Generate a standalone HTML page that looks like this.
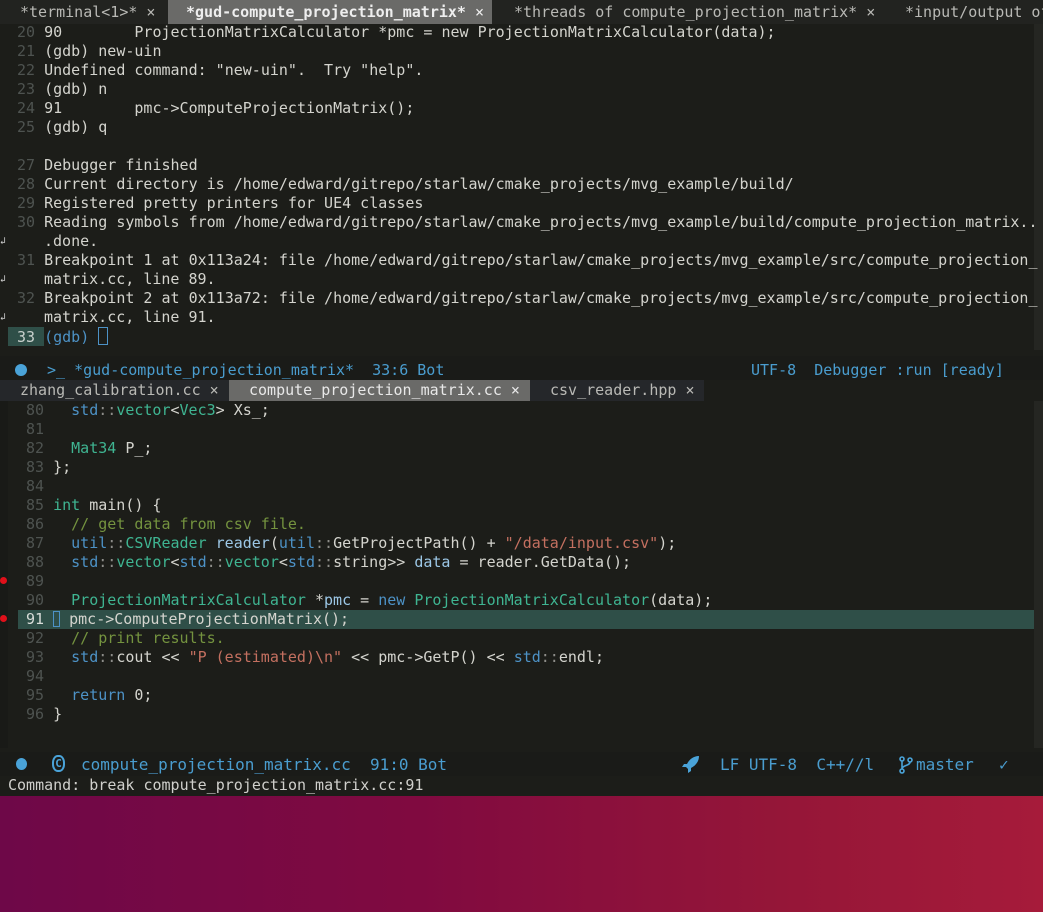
<!DOCTYPE html>
<html><head><meta charset="utf-8"><style>
body{margin:0;width:1043px;height:912px;overflow:hidden;background:linear-gradient(90deg,#6e0848 0%,#800a40 40%,#951638 75%,#a61b3a 100%);font-family:"DejaVu Sans Mono","Liberation Mono",monospace;font-size:15px;position:relative}
.win{position:absolute;left:0;top:0;width:1043px;height:796px;background:#1c1d19}
.l{position:absolute;white-space:pre;height:19px;line-height:19px;color:#d4d4ce}
.n{color:#4e5350}
.tabs{position:absolute;left:0;width:1043px;height:23px;background:#222320;line-height:23px;color:#b9b9b5;white-space:pre}
.tab{position:absolute;top:0;height:100%}
.b{color:#4d92c6}.g{color:#3fb592}.s{color:#c47060}.c{color:#74933f}.v{color:#9cc7e6}.d{color:#8e8e8a}
.st{color:#4a9dcf}
.w{position:absolute;left:0;color:#ccc;font-size:10px;line-height:19px;height:19px}
</style></head><body>
<div class="win"></div>
<div class="tabs" style="top:0;height:24px;line-height:24px">
<span class="tab" style="left:20px">*terminal&lt;1&gt;* ×</span>
<span class="tab" style="left:168px;width:324px;background:#6a6a68;color:#eee;font-weight:bold;padding-left:18px;box-sizing:border-box">*gud-compute_projection_matrix* <span style="font-weight:normal">×</span></span>
<span class="tab" style="left:514px">*threads of compute_projection_matrix* ×</span>
<span class="tab" style="left:905px">*input/output of</span>
</div>
<div style="position:absolute;left:1034px;top:24px;width:9px;height:326px;background:#252622"></div>
<div class="l" style="top:23px;left:17px"><span class="n">20</span> 90        ProjectionMatrixCalculator *pmc = new ProjectionMatrixCalculator(data);</div>
<div class="l" style="top:42px;left:17px"><span class="n">21</span> (gdb) new-uin</div>
<div class="l" style="top:61px;left:17px"><span class="n">22</span> Undefined command: "new-uin".  Try "help".</div>
<div class="l" style="top:80px;left:17px"><span class="n">23</span> (gdb) n</div>
<div class="l" style="top:99px;left:17px"><span class="n">24</span> 91        pmc-&gt;ComputeProjectionMatrix();</div>
<div class="l" style="top:118px;left:17px"><span class="n">25</span> (gdb) q</div>
<div class="l" style="top:156px;left:17px"><span class="n">27</span> Debugger finished</div>
<div class="l" style="top:175px;left:17px"><span class="n">28</span> Current directory is /home/edward/gitrepo/starlaw/cmake_projects/mvg_example/build/</div>
<div class="l" style="top:194px;left:17px"><span class="n">29</span> Registered pretty printers for UE4 classes</div>
<div class="l" style="top:213px;left:17px"><span class="n">30</span> Reading symbols from /home/edward/gitrepo/starlaw/cmake_projects/mvg_example/build/compute_projection_matrix..</div>
<div class="w" style="top:232px">↲</div><div class="l" style="top:232px;left:44px">.done.</div>
<div class="l" style="top:251px;left:17px"><span class="n">31</span> Breakpoint 1 at 0x113a24: file /home/edward/gitrepo/starlaw/cmake_projects/mvg_example/src/compute_projection_</div>
<div class="w" style="top:270px">↲</div><div class="l" style="top:270px;left:44px">matrix.cc, line 89.</div>
<div class="l" style="top:289px;left:17px"><span class="n">32</span> Breakpoint 2 at 0x113a72: file /home/edward/gitrepo/starlaw/cmake_projects/mvg_example/src/compute_projection_</div>
<div class="w" style="top:308px">↲</div><div class="l" style="top:308px;left:44px">matrix.cc, line 91.</div>
<div style="position:absolute;left:8px;top:327px;width:36px;height:19px;background:#2f4f48"></div>
<div class="l" style="top:327px;left:17px"><span style="color:#c8d0cc">33</span> <span class="b">(gdb)</span> <span style="display:inline-block;width:8px;height:16px;border:1px solid #4d92c6;vertical-align:-3px"></span></div>
<div style="position:absolute;left:0;top:356px;width:1043px;height:24px;background:#1a1b18"></div>
<div style="position:absolute;left:15px;top:364px;width:12px;height:12px;border-radius:50%;background:#4aa3d8"></div>
<div class="l st" style="top:359px;left:47px;line-height:22px">&gt;_ *gud-compute_projection_matrix*  33:6 Bot</div>
<div class="l st" style="top:359px;left:751px;line-height:22px">UTF-8  Debugger :run [ready]</div>
<div class="tabs" style="top:380px;height:21px;line-height:21px;background:#1c1d19">
<span class="tab" style="left:0;width:229px;background:#25272a;padding-left:20px;box-sizing:border-box">zhang_calibration.cc ×</span>
<span class="tab" style="left:229px;width:301px;background:#6a6a68;color:#e8e8e8;padding-left:20px;box-sizing:border-box">compute_projection_matrix.cc ×</span>
<span class="tab" style="left:530px;width:174px;background:#25272a;padding-left:20px;box-sizing:border-box">csv_reader.hpp ×</span>
</div>
<div style="position:absolute;left:0;top:401px;width:8px;height:347px;background:#191a17"></div>
<div style="position:absolute;left:1034px;top:401px;width:9px;height:347px;background:#252622"></div>
<div style="position:absolute;left:18px;top:610px;width:1016px;height:19px;background:#2f4f48"></div>
<div style="position:absolute;left:0;top:577px;width:7px;height:7px;border-radius:50%;background:#e0101a"></div>
<div style="position:absolute;left:0;top:615px;width:7px;height:7px;border-radius:50%;background:#e0101a"></div>
<div class="l" style="top:401px;left:26px"><span class="n">80</span>   <span class="b">std</span><span class="d">::</span><span class="g">vector</span>&lt;<span class="g">Vec3</span>&gt; Xs_;</div>
<div class="l" style="top:420px;left:26px"><span class="n">81</span></div>
<div class="l" style="top:439px;left:26px"><span class="n">82</span>   <span class="g">Mat34</span> P_;</div>
<div class="l" style="top:458px;left:26px"><span class="n">83</span> };</div>
<div class="l" style="top:477px;left:26px"><span class="n">84</span></div>
<div class="l" style="top:496px;left:26px"><span class="n">85</span> <span class="g">int</span> main() {</div>
<div class="l" style="top:515px;left:26px"><span class="n">86</span>   <span class="c">// get data from csv file.</span></div>
<div class="l" style="top:534px;left:26px"><span class="n">87</span>   <span class="b">util</span><span class="d">::</span><span class="g">CSVReader</span> <span class="v">reader</span>(<span class="b">util</span><span class="d">::</span>GetProjectPath() + <span class="s">"/data/input.csv"</span>);</div>
<div class="l" style="top:553px;left:26px"><span class="n">88</span>   <span class="b">std</span><span class="d">::</span><span class="g">vector</span>&lt;<span class="b">std</span><span class="d">::</span><span class="g">vector</span>&lt;<span class="b">std</span><span class="d">::</span>string&gt;&gt; <span class="v">data</span> = reader.GetData();</div>
<div class="l" style="top:572px;left:26px"><span class="n">89</span></div>
<div class="l" style="top:591px;left:26px"><span class="n">90</span>   <span class="g">ProjectionMatrixCalculator</span> *<span class="v">pmc</span> = <span class="b">new</span> <span class="g">ProjectionMatrixCalculator</span>(data);</div>
<div class="l" style="top:610px;left:26px"><span style="color:#d8dcd8">91</span> <span style="display:inline-block;width:7px;height:16px;border:1px solid #4d92c6;vertical-align:-3px;box-sizing:border-box"></span> pmc-&gt;ComputeProjectionMatrix();</div>
<div class="l" style="top:629px;left:26px"><span class="n">92</span>   <span class="c">// print results.</span></div>
<div class="l" style="top:648px;left:26px"><span class="n">93</span>   <span class="b">std</span><span class="d">::</span>cout &lt;&lt; <span class="s">"P (estimated)\n"</span> &lt;&lt; pmc-&gt;GetP() &lt;&lt; <span class="b">std</span><span class="d">::</span>endl;</div>
<div class="l" style="top:667px;left:26px"><span class="n">94</span></div>
<div class="l" style="top:686px;left:26px"><span class="n">95</span>   <span class="b">return</span> 0;</div>
<div class="l" style="top:705px;left:26px"><span class="n">96</span> }</div>
<div style="position:absolute;left:0;top:752px;width:1043px;height:24px;background:#1a1b18"></div>
<div style="position:absolute;left:16px;top:758px;width:11px;height:12px;border-radius:50%;background:#4aa3d8"></div>
<div style="position:absolute;left:52px;top:755px;width:13px;height:17px;border:2px solid #4aa3d8;border-radius:45%;box-sizing:border-box;color:#4aa3d8;font-size:11px;line-height:13px;text-align:center;font-weight:bold">C</div>
<div class="l st" style="top:754px;left:81px;line-height:22px;font-size:16px">compute_projection_matrix.cc  91:0 Bot</div>
<svg style="position:absolute;left:682px;top:755px" width="18" height="18" viewBox="0 0 18 18"><path d="M17 1 C11 1 7 5 5 9 L2 9 L0 12 L4 12 L6 14 L6 18 L9 16 L9 13 C13 11 17 7 17 1 Z" fill="#4aa3d8"/></svg>
<div class="l st" style="top:754px;left:720px;line-height:22px;font-size:16px">LF UTF-8  C++//l</div>
<svg style="position:absolute;left:899px;top:756px" width="14" height="18" viewBox="0 0 14 18"><g stroke="#4aa3d8" stroke-width="1.6" fill="none"><circle cx="3" cy="3" r="2"/><circle cx="11" cy="4" r="2"/><circle cx="3" cy="15" r="2"/><path d="M3 5 V13 M11 6 C11 10 3 9 3 13"/></g></svg>
<div class="l st" style="top:754px;left:916px;line-height:22px;font-size:16px">master</div>
<div class="l st" style="top:754px;left:999px;line-height:22px;font-size:16px">✓</div>
<div class="l" style="top:776px;left:8px;color:#d0d0cc;line-height:19px">Command: break compute_projection_matrix.cc:91</div>
</body></html>
